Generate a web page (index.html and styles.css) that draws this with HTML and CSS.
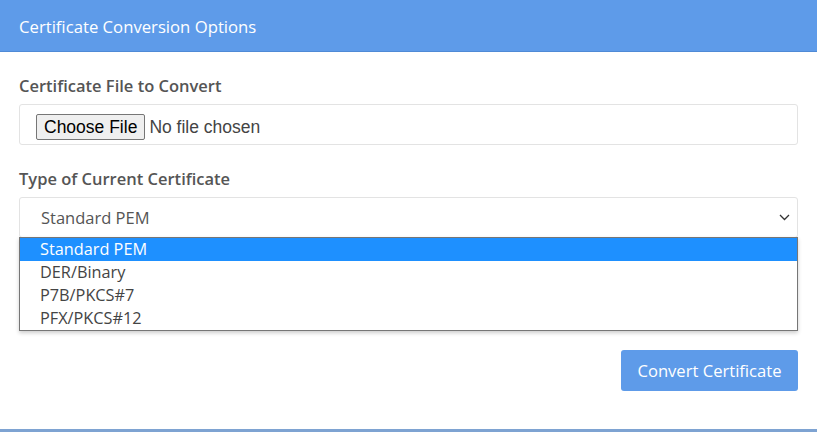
FILE: index.html
```html
<!DOCTYPE html>
<html lang="en">
<head>
    <meta charset="UTF-8">
    <meta name="viewport" content="width=device-width, initial-scale=1.0">
    <title>Certificate Conversion</title>
    <link rel="stylesheet" href="styles.css">
</head>
<body>
    <div class="panel">
        <div class="panel-heading">Certificate Conversion Options</div>
        <div class="panel-body">
            <div class="form-group">
                <label class="form-label">Certificate File to Convert</label>
                <div class="file-box">
                    <span class="file-btn">Choose File</span>
                    <span class="file-name">No file chosen</span>
                </div>
            </div>
            <div class="form-group">
                <label class="form-label">Type of Current Certificate</label>
                <div class="select-wrap">
                    <div class="select-box">
                        <span>Standard PEM</span>
                        <svg class="chevron" width="11" height="7" viewBox="0 0 11 7">
                            <path d="M1 1l4.5 4.5L10 1" fill="none" stroke="#333" stroke-width="1.3"/>
                        </svg>
                    </div>
                    <ul class="select-list">
                        <li class="selected">Standard PEM</li>
                        <li>DER/Binary</li>
                        <li>P7B/PKCS#7</li>
                        <li>PFX/PKCS#12</li>
                    </ul>
                </div>
            </div>
            <div class="actions">
                <button class="btn-convert">Convert Certificate</button>
            </div>
        </div>
    </div>
</body>
</html>
```

FILE: styles.css
```css
body {
    margin: 0;
    font-family: "Open Sans", sans-serif;
    background: #fff;
    color: #555;
}

.panel {
    border-bottom: 3px solid #7ea3d2;
    height: 429px;
}

.panel-heading {
    background-color: #5e9be9;
    border-bottom: 1px solid #4f8ad6;
    color: #fff;
    font-size: 16.7px;
    height: 51px;
    line-height: 53px;
    padding: 0 19px;
}

.panel-body {
    padding: 23px 19px 0;
}

.form-group {
    margin-bottom: 23px;
}

.form-label {
    display: block;
    font-size: 16.5px;
    line-height: 22px;
    font-weight: 600;
    color: #555;
    margin-bottom: 7px;
}

.file-box {
    display: flex;
    align-items: center;
    height: 34px;
    border: 1px solid #e3e3e3;
    border-radius: 3px;
    padding: 5px 16px 0;
}

.file-btn {
    font-family: "Liberation Sans", Arial, sans-serif;
    font-size: 17.5px;
    line-height: 20px;
    color: #000;
    background: #efefef;
    border: 1px solid #767676;
    border-radius: 2px;
    padding: 2px 7px;
}

.file-name {
    font-family: "Liberation Sans", Arial, sans-serif;
    font-size: 17.5px;
    color: #444;
    margin-left: 4px;
}

.select-wrap {
    position: relative;
}

.select-box {
    display: flex;
    align-items: center;
    justify-content: space-between;
    height: 39px;
    border: 1px solid #e3e3e3;
    border-radius: 3px;
    padding: 0 7px 0 21px;
    font-size: 16.5px;
    color: #555;
}

.select-list {
    position: absolute;
    left: 0;
    right: 0;
    top: 40px;
    margin: 0;
    padding: 0;
    list-style: none;
    background: #fff;
    border: 1px solid #767676;
    box-shadow: 0 2px 4px rgba(0, 0, 0, 0.2);
}

.select-list li {
    font-size: 16.3px;
    color: #444;
    line-height: 23px;
    padding: 0 20px;
}

.select-list li.selected {
    background: #1e90ff;
    color: #fff;
}

.actions {
    display: flex;
    justify-content: flex-end;
    margin-top: 112px;
}

.btn-convert {
    font-family: "Open Sans", sans-serif;
    font-size: 16.6px;
    color: #fff;
    background-color: #5e9be9;
    border: none;
    border-radius: 3px;
    width: 177px;
    height: 41px;
    cursor: pointer;
}
```
